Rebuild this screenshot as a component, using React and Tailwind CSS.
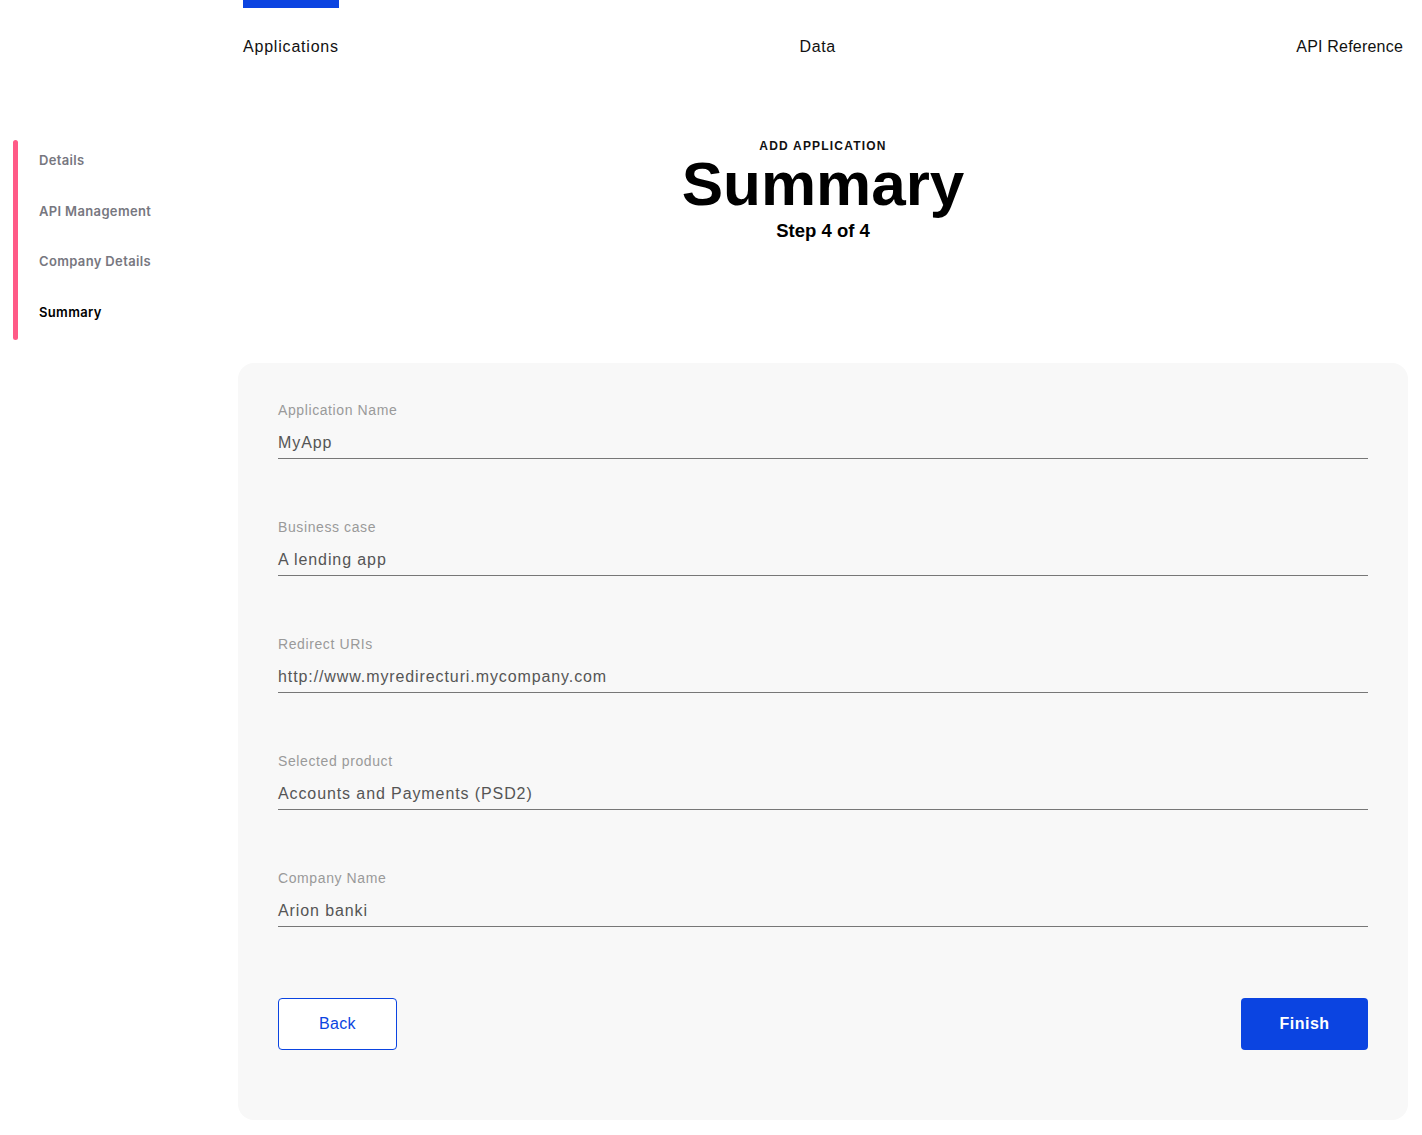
import React from "react";

const steps = [
  { label: "Details", active: false },
  { label: "API Management", active: false },
  { label: "Company Details", active: false },
  { label: "Summary", active: true },
];

const fields = [
  { label: "Application Name", value: "MyApp" },
  { label: "Business case", value: "A lending app" },
  { label: "Redirect URIs", value: "http://www.myredirecturi.mycompany.com" },
  { label: "Selected product", value: "Accounts and Payments (PSD2)" },
  { label: "Company Name", value: "Arion banki" },
];

const App = () => {
  return (
    <div className="flex min-h-screen bg-white font-['Liberation_Sans',Arial,sans-serif] text-black">
      {/* Sidebar */}
      <div className="w-[238px] shrink-0 pt-[140px] pl-[13px]">
        <div className="flex">
          <div className="w-[5px] h-[200px] rounded-full bg-[#ff5a87]" />
          <ul className="pl-[21px] pt-[12px] flex flex-col gap-[34.7px]">
            {steps.map((s) => (
              <li
                key={s.label}
                className={`font-['Inter',sans-serif] text-[13px] leading-[16px] font-semibold tracking-[0.35px] ${
                  s.active ? "text-black" : "text-[#77777f]"
                }`}
              >
                {s.label}
              </li>
            ))}
          </ul>
        </div>
      </div>

      {/* Main */}
      <div className="flex-1 pr-[14px] pb-[15px]">
        <nav className="flex justify-between px-[5px]">
          <div className="flex flex-col">
            <div className="h-[8px] w-[96px] bg-[#0b44e1]" />
            <span className="mt-[29px] text-[16px] leading-[20px] tracking-[0.8px] text-[#111]">Applications</span>
          </div>
          <div className="flex flex-col">
            <div className="h-[8px]" />
            <span className="mt-[29px] text-[16px] leading-[20px] tracking-[0.6px] text-[#111]">Data</span>
          </div>
          <div className="flex flex-col">
            <div className="h-[8px]" />
            <span className="mt-[29px] text-[16px] leading-[20px] tracking-[0.2px] text-[#111]">API Reference</span>
          </div>
        </nav>

        <div className="flex flex-col items-center mt-[81px]">
          <div className="text-[12px] leading-[16px] font-bold tracking-[1.2px] text-[#111]">ADD APPLICATION</div>
          <h1 className="text-[62px] leading-[60px] font-bold">Summary</h1>
          <div className="text-[18.5px] leading-[22px] font-bold mt-[6px]">Step 4 of 4</div>
        </div>

        <div className="mt-[121px] rounded-[16px] bg-[#f8f8f8] px-[40px] pt-[39px] pb-[70px]">
          <div className="flex flex-col gap-[60px]">
            {fields.map((f) => (
              <div key={f.label} className="flex flex-col">
                <div className="text-[14px] leading-[16px] text-[#9a9a9a] tracking-[0.6px]">{f.label}</div>
                <div className="mt-[15px] pb-[5px] border-b border-[#777] text-[16px] leading-[20px] text-[#555] tracking-[0.9px]">
                  {f.value}
                </div>
              </div>
            ))}
          </div>
          <div className="mt-[71px] flex justify-between">
            <button className="h-[52px] w-[119px] rounded-[4px] border border-[#0b44e1] bg-white text-[16px] text-[#0b44e1] tracking-[0.3px]">
              Back
            </button>
            <button className="h-[52px] w-[127px] rounded-[4px] bg-[#0b44e1] text-[16px] font-bold text-white tracking-[0.5px]">
              Finish
            </button>
          </div>
        </div>
      </div>
    </div>
  );
};

export default App;
